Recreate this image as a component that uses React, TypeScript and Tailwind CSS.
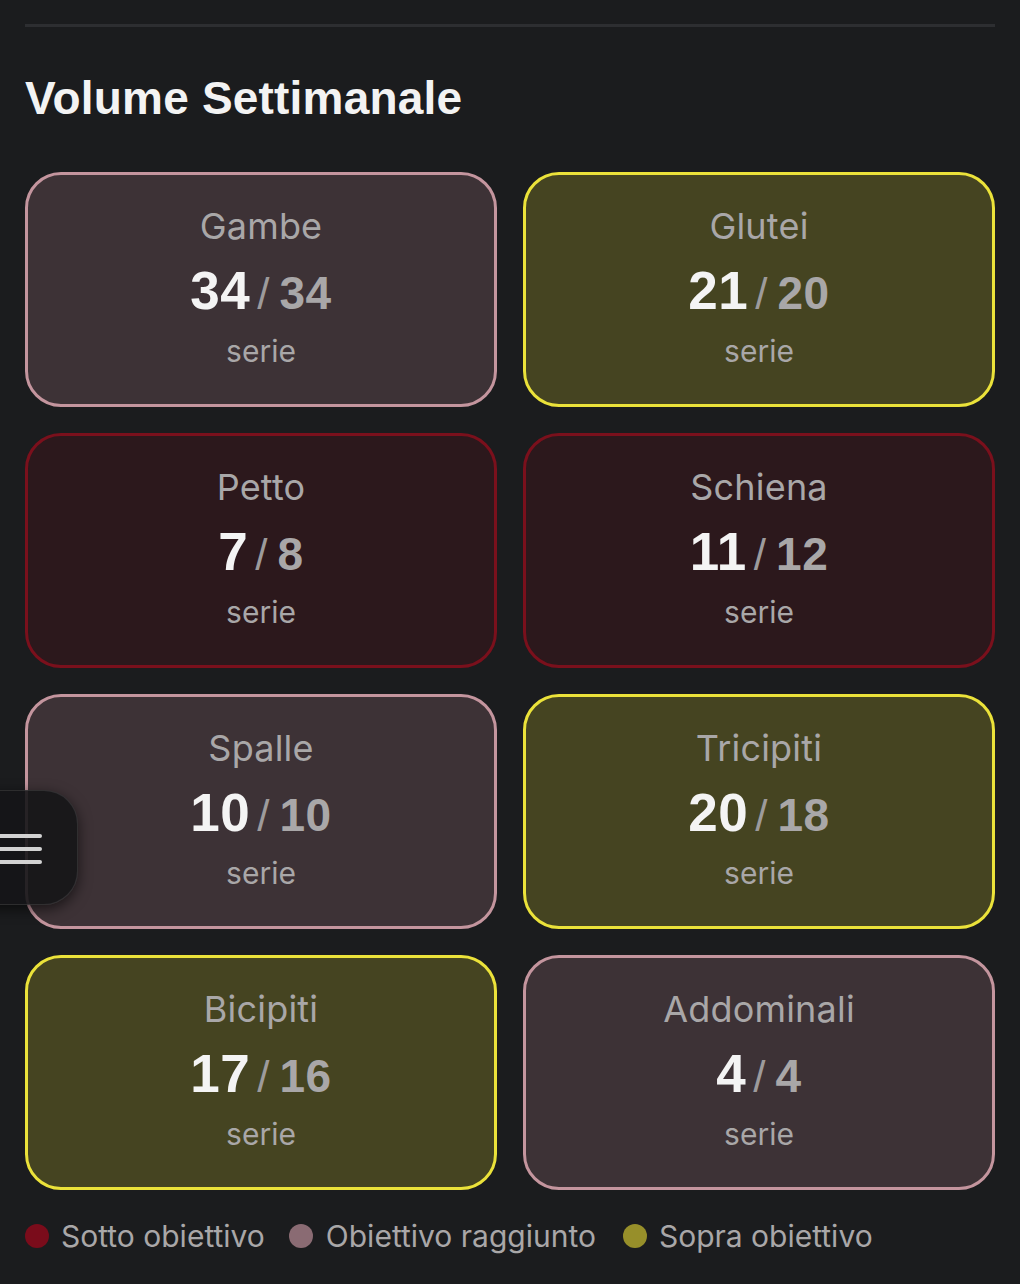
import React from "react";

type Status = "ok" | "over" | "under";

const cards: { name: string; done: number; target: number; status: Status }[] = [
  { name: "Gambe", done: 34, target: 34, status: "ok" },
  { name: "Glutei", done: 21, target: 20, status: "over" },
  { name: "Petto", done: 7, target: 8, status: "under" },
  { name: "Schiena", done: 11, target: 12, status: "under" },
  { name: "Spalle", done: 10, target: 10, status: "ok" },
  { name: "Tricipiti", done: 20, target: 18, status: "over" },
  { name: "Bicipiti", done: 17, target: 16, status: "over" },
  { name: "Addominali", done: 4, target: 4, status: "ok" },
];

const cardStyles: Record<Status, string> = {
  ok: "bg-[#3d3236] border-[#c4959e]",
  over: "bg-[#454421] border-[#ebe23a]",
  under: "bg-[#2c181c] border-[#7a101c]",
};

function Card({ name, done, target, status }: { name: string; done: number; target: number; status: Status }) {
  return (
    <div
      className={`h-[235px] rounded-[36px] border-[3px] flex flex-col items-center pt-[30px] ${cardStyles[status]}`}
    >
      <div className="font-['Inter',sans-serif] text-[36px] leading-[42px] tracking-[0.2px] text-[#a9a7a8]">{name}</div>
      <div className="mt-[16px] flex items-baseline h-[56px] font-['Liberation_Sans',Arial,sans-serif]">
        <span className="text-[53px] leading-[56px] font-bold tracking-[0.5px] text-[#f4f4f4]">{done}</span>
        <span className="ml-[7px] mr-[10px] text-[44px] leading-[56px] font-normal text-[#9d9b9c]">/</span>
        <span className="text-[46px] leading-[56px] font-bold tracking-[0.5px] text-[#a9a7a8]">{target}</span>
      </div>
      <div className="mt-[14px] font-['Inter',sans-serif] text-[30px] leading-[36px] text-[#a9a7a8]">serie</div>
    </div>
  );
}

export default function App() {
  return (
    <div className="relative min-h-[1284px] w-[1020px] bg-[#1b1c1e] px-[25px] pt-[24px] overflow-hidden">
      <div className="h-[3px] bg-[#2d2e31]" />
      <h2 className="mt-[45px] font-['Liberation_Sans',Arial,sans-serif] font-bold text-[46px] leading-[52px] tracking-[0.2px] text-[#f3f3f3]">
        Volume Settimanale
      </h2>
      <div className="mt-[48px] grid grid-cols-2 gap-[26px]">
        {cards.map((c) => (
          <Card key={c.name} {...c} />
        ))}
      </div>
      <div className="mt-[28px] flex items-center font-['Inter',sans-serif] text-[30px] leading-[36px] text-[#a9a7a8]">
        <span className="w-[24px] h-[24px] rounded-full bg-[#7a0c1b]" />
        <span className="ml-[12px]">Sotto obiettivo</span>
        <span className="ml-[24px] w-[24px] h-[24px] rounded-full bg-[#8a6b73]" />
        <span className="ml-[13px]">Obiettivo raggiunto</span>
        <span className="ml-[27px] w-[24px] h-[24px] rounded-full bg-[#978f2a]" />
        <span className="ml-[12px]">Sopra obiettivo</span>
      </div>

      <button className="absolute left-[-40px] top-[790px] w-[118px] h-[115px] rounded-r-[34px] bg-[#151517]/90 border border-white/10 shadow-[0_4px_14px_rgba(0,0,0,0.6)]">
        <span className="absolute left-[36px] top-[43px] w-[45px] h-[4px] rounded-full bg-[#d2d2d2]" />
        <span className="absolute left-[36px] top-[56px] w-[45px] h-[4px] rounded-full bg-[#d2d2d2]" />
        <span className="absolute left-[36px] top-[69px] w-[45px] h-[4px] rounded-full bg-[#d2d2d2]" />
      </button>
    </div>
  );
}
